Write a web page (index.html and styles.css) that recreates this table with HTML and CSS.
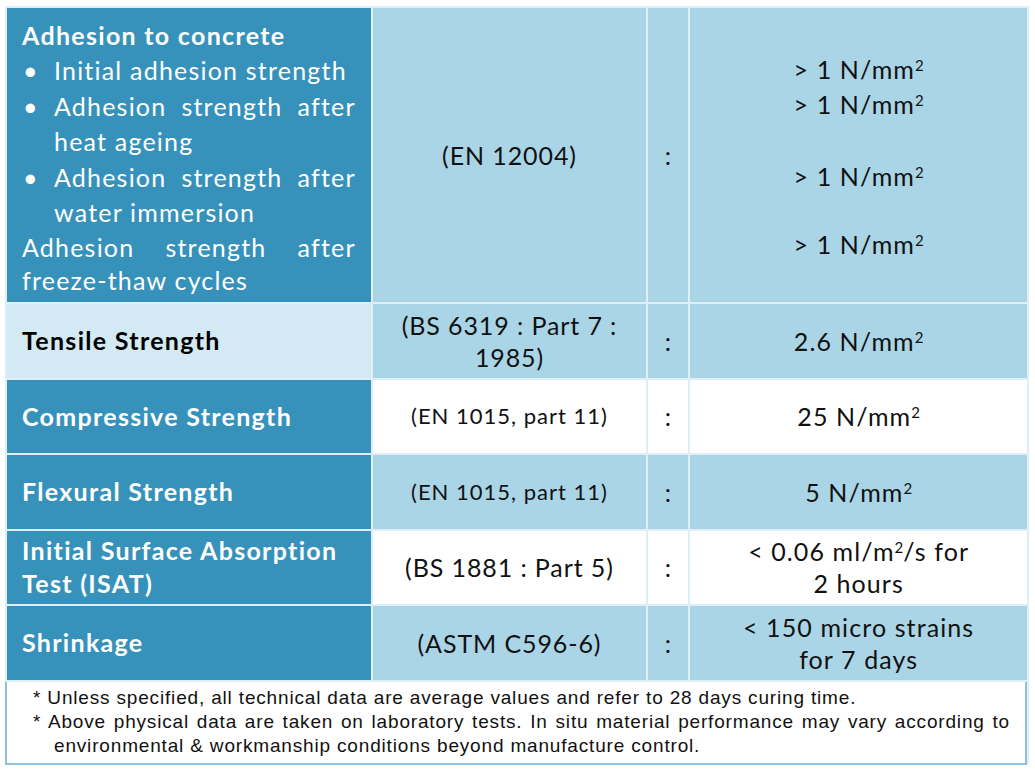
FILE: index.html
```html
<!DOCTYPE html>
<html>
<head>
<meta charset="utf-8">
<link rel="stylesheet" href="styles.css">
</head>
<body>
<div class="sheet">
  <table class="spec">
    <colgroup>
      <col class="c-label">
      <col class="c-std">
      <col class="c-sep">
      <col class="c-val">
    </colgroup>
    <tr class="r-big">
      <td class="label dark">
        <div class="head">Adhesion to concrete</div>
        <ul class="bullets">
          <li>Initial adhesion strength</li>
          <li class="just">Adhesion strength after heat ageing</li>
          <li class="just">Adhesion strength after water immersion</li>
        </ul>
        <div class="plain just">Adhesion strength after freeze-thaw cycles</div>
      </td>
      <td class="std light">(EN 12004)</td>
      <td class="sep light">:</td>
      <td class="val light multi">
        <div>&gt; 1 N/mm<sup>2</sup></div>
        <div>&gt; 1 N/mm<sup>2</sup></div>
        <div class="gap1">&gt; 1 N/mm<sup>2</sup></div>
        <div class="gap2">&gt; 1 N/mm<sup>2</sup></div>
      </td>
    </tr>
    <tr class="r-std">
      <td class="label pale">Tensile Strength</td>
      <td class="std light">(BS 6319 : Part 7 :<br>1985)</td>
      <td class="sep light">:</td>
      <td class="val light">2.6 N/mm<sup>2</sup></td>
    </tr>
    <tr class="r-std">
      <td class="label dark">Compressive Strength</td>
      <td class="std white small">(EN 1015, part 11)</td>
      <td class="sep white">:</td>
      <td class="val white">25 N/mm<sup>2</sup></td>
    </tr>
    <tr class="r-std">
      <td class="label dark">Flexural Strength</td>
      <td class="std light small">(EN 1015, part 11)</td>
      <td class="sep light">:</td>
      <td class="val light">5 N/mm<sup>2</sup></td>
    </tr>
    <tr class="r-std">
      <td class="label dark">Initial Surface Absorption<br>Test (ISAT)</td>
      <td class="std white">(BS 1881 : Part 5)</td>
      <td class="sep white">:</td>
      <td class="val white">&lt; 0.06 ml/m<sup>2</sup>/s for<br>2 hours</td>
    </tr>
    <tr class="r-std">
      <td class="label dark">Shrinkage</td>
      <td class="std light">(ASTM C596-6)</td>
      <td class="sep light">:</td>
      <td class="val light">&lt; 150 micro strains<br>for 7 days</td>
    </tr>
  </table>
  <div class="notes">
    <p class="note">* Unless specified, all technical data are average values and refer to 28 days curing time.</p>
    <p class="note">* Above physical data are taken on laboratory tests. In situ material performance may vary according to environmental &amp; workmanship conditions beyond manufacture control.</p>
  </div>
</div>
</body>
</html>
```

FILE: styles.css
```css
html, body {
  margin: 0;
  padding: 0;
  background: #ffffff;
}

.sheet {
  width: 1024px;
  margin: 6px 0 0 5px;
  background: #dfeff7;
}

.spec {
  border-collapse: separate;
  border-spacing: 2px;
  table-layout: fixed;
  width: 1024px;
  background: #dfeff7;
  font-family: Lato, "Open Sans", sans-serif;
  color: #111111;
}

.c-label { width: 363px; }
.c-std { width: 273px; }
.c-sep { width: 40px; }
.c-val { width: 336px; }

.spec td {
  padding: 0;
  vertical-align: middle;
}

.r-big td { height: 290px; }
.r-std td { height: 73.5px; }

.dark { background: #3792bb; color: #ffffff; }
.pale { background: #d3e9f3; color: #000000; }
.light { background: #aad5e6; }
.white { background: #ffffff; }

.label {
  font-weight: 700;
  font-size: 25px;
  line-height: 33px;
  letter-spacing: 1.3px;
}

.spec td.label {
  padding: 0 15px;
}

.spec .r-big td.label {
  padding: 4px 15px 0;
  font-weight: 400;
  line-height: 35.5px;
  letter-spacing: 1.2px;
}

.r-big .label .head {
  font-weight: 700;
  letter-spacing: 1.3px;
}

.r-big .label .plain {
  line-height: 33px;
}

.bullets {
  list-style: none;
  margin: 0;
  padding: 0 0 0 32px;
}

.bullets li {
  position: relative;
}

.bullets li::before {
  content: "\2022";
  position: absolute;
  left: -31px;
  top: 0;
}

.just {
  text-align: justify;
}

.std, .val, .sep {
  text-align: center;
  font-size: 25px;
  line-height: 32px;
  letter-spacing: 0.9px;
}

.val {
  letter-spacing: 1.1px;
}

.std.small {
  font-size: 22px;
  letter-spacing: 1px;
}

.val sup {
  font-size: 0.6em;
  line-height: 0;
  vertical-align: 0;
  position: relative;
  top: -0.55em;
  letter-spacing: 0;
}

.spec .r-big td.multi {
  line-height: 35px;
  padding-top: 4px;
}

.gap1 { margin-top: 37px; }
.gap2 { margin-top: 33px; }

.notes {
  margin: 0 2px 0 0;
  background: #ffffff;
  border: 2px solid #8ec3d9;
  border-top: none;
  padding: 4px 15px 5px 26px;
  font-family: "Liberation Sans", Arial, sans-serif;
  font-size: 19px;
  line-height: 24px;
  letter-spacing: 0.83px;
  color: #111111;
}

.note {
  margin: 0;
  padding-left: 21px;
  text-indent: -21px;
  text-align: justify;
}
```
